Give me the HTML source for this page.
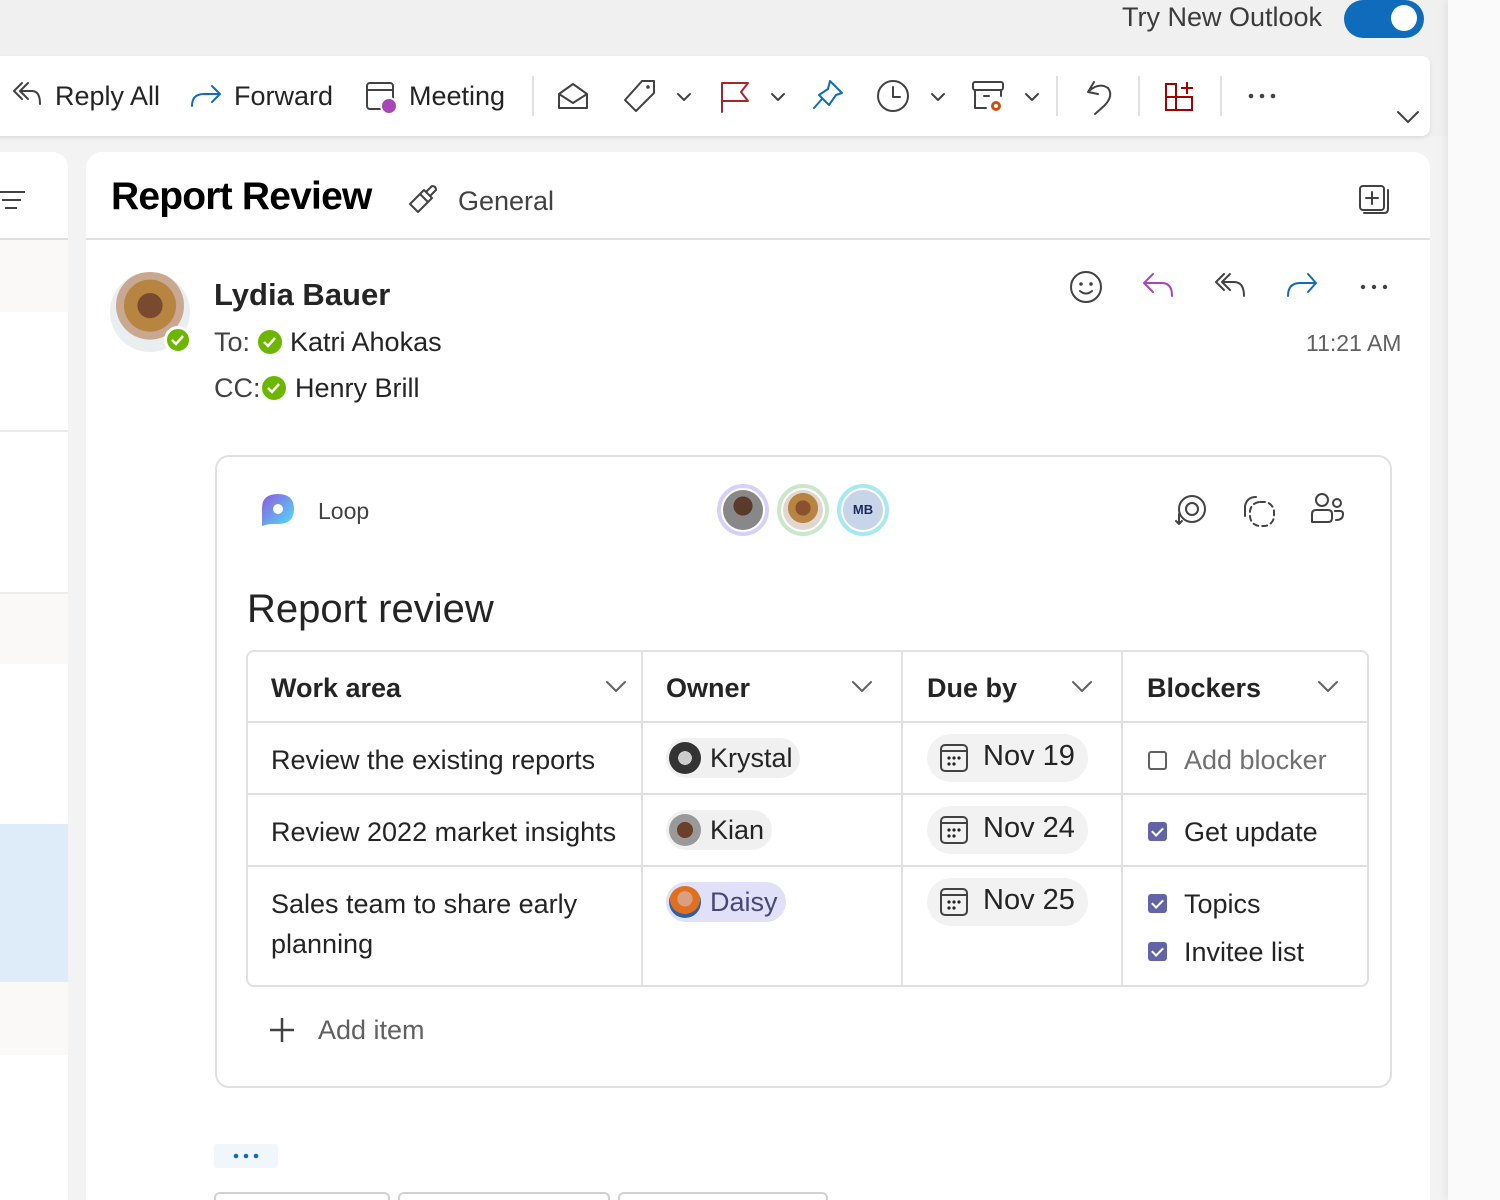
<!DOCTYPE html>
<html><head><meta charset="utf-8">
<style>
*{box-sizing:border-box;margin:0;padding:0}
html,body{width:1500px;height:1200px;overflow:hidden}
body{background:#f0f0f0;font-family:"Liberation Sans",sans-serif;color:#242424;position:relative}
.a{position:absolute}
.t{position:absolute;white-space:nowrap}
svg{position:absolute;overflow:visible}
.ic{fill:none;stroke:#424242;stroke-width:2;stroke-linecap:round;stroke-linejoin:round}
.pill{position:absolute;background:#f0f0f0;border-radius:22px}
.cb{position:absolute;width:19px;height:19px;border-radius:3px;background:#6264a7}
.cb:after{content:"";position:absolute;left:6px;top:3px;width:5px;height:9px;border:solid #fff;border-width:0 2px 2px 0;transform:rotate(45deg)}
</style></head><body>
<div class="a" style="left:0;top:136px;width:1448px;height:1064px;background:#f3f3f3"></div>
<div class="a" style="left:1448px;top:0;width:52px;height:1200px;background:#fafafa;box-shadow:-3px 0 8px rgba(0,0,0,.06)"></div>

<div class="t" style="left:1122px;top:2px;font-size:27px;color:#3b3b3b">Try New Outlook</div>
<div class="a" style="left:1344px;top:0;width:80px;height:38px;border-radius:19px;background:#0f6cbd"></div>
<div class="a" style="left:1391px;top:5px;width:26px;height:26px;border-radius:13px;background:#fff"></div>

<div class="a" style="left:-10px;top:56px;width:1440px;height:80px;background:#fff;border-radius:8px;box-shadow:0 2px 4px rgba(0,0,0,.1)"></div>
<svg width="40" height="40" style="left:8px;top:80px"><path class="ic" d="M14 3 L6 11 L14 19 M20 3 L12 11 L20 19 M12 11 H24 Q32 11 32 24" /></svg>
<div class="t" style="left:55px;top:81px;font-size:27px">Reply All</div>
<svg width="40" height="40" style="left:190px;top:82px"><path class="ic" style="stroke:#0f6cbd" d="M2 24 Q2 12 14 12 H30 M22 4 L30 12 L22 20"/></svg>
<div class="t" style="left:234px;top:81px;font-size:27px">Forward</div>
<svg width="40" height="40" style="left:365px;top:80px"><rect class="ic" x="2" y="3" width="26" height="26" rx="3"/><path class="ic" d="M2 10 H28"/><circle cx="24" cy="26" r="8" fill="#a845b8" stroke="#fff" stroke-width="2"/></svg>
<div class="t" style="left:409px;top:81px;font-size:27px">Meeting</div>
<div class="a" style="left:532px;top:76px;width:2px;height:40px;background:#e0e0e0"></div>
<svg width="40" height="40" style="left:556px;top:80px"><path class="ic" d="M3 14 L17 4 L31 14 V28 H3 Z M3 14 L17 23 L31 14"/></svg>
<svg width="40" height="40" style="left:622px;top:78px"><path class="ic" d="M20 3 H32 V15 L14 33 L3 22 Z"/><circle cx="26" cy="9" r="1.8" fill="#424242"/></svg>
<svg width="20" height="20" style="left:676px;top:90px"><path class="ic" d="M2 4 L8 10 L14 4"/></svg>
<svg width="40" height="40" style="left:720px;top:80px"><path class="ic" style="stroke:#a4262c" d="M2 32 V3 H28 L21 12 L28 21 H2"/></svg>
<svg width="20" height="20" style="left:770px;top:90px"><path class="ic" d="M2 4 L8 10 L14 4"/></svg>
<svg width="40" height="40" style="left:812px;top:79px"><path class="ic" style="stroke:#0f6cbd" d="M18 2 L30 14 L24 16 L17 26 L7 16 L16 10 Z M10 20 L2 29"/></svg>
<svg width="40" height="40" style="left:876px;top:79px"><circle class="ic" cx="17" cy="17" r="15"/><path class="ic" d="M17 8 V18 H24"/></svg>
<svg width="20" height="20" style="left:930px;top:90px"><path class="ic" d="M2 4 L8 10 L14 4"/></svg>
<svg width="40" height="40" style="left:972px;top:80px"><rect class="ic" x="1" y="2" width="30" height="8" rx="2"/><path class="ic" d="M3 10 V28 H14 M29 10 V16 M12 16 H17"/><circle cx="24" cy="26" r="5" fill="#ca5010"/><circle cx="24" cy="26" r="2" fill="#fff"/></svg>
<svg width="20" height="20" style="left:1024px;top:90px"><path class="ic" d="M2 4 L8 10 L14 4"/></svg>
<div class="a" style="left:1056px;top:76px;width:2px;height:40px;background:#e0e0e0"></div>
<svg width="40" height="40" style="left:1084px;top:80px"><path class="ic" d="M4 12 L10 2 M4 12 L14 14 M5 11 Q15 2 24 8 Q30 16 20 26 L11 34"/></svg>
<div class="a" style="left:1138px;top:76px;width:2px;height:40px;background:#e0e0e0"></div>
<svg width="40" height="40" style="left:1164px;top:80px"><path fill="none" stroke="#a80000" stroke-width="2" d="M2 4 H12 V30 H2 Z M2 17 H28 V30 H12 M23 2 V14 M17 8 H29"/></svg>
<div class="a" style="left:1220px;top:76px;width:2px;height:40px;background:#e0e0e0"></div>
<svg width="40" height="10" style="left:1248px;top:91px"><g fill="#424242"><circle cx="3" cy="5" r="2.3"/><circle cx="14" cy="5" r="2.3"/><circle cx="25" cy="5" r="2.3"/></g></svg>
<svg width="30" height="20" style="left:1396px;top:110px"><path class="ic" d="M2 2 L12 12 L22 2"/></svg>

<div class="a" style="left:-20px;top:152px;width:88px;height:1048px;background:#fff;border-radius:0 16px 0 0;overflow:hidden">
 <div class="a" style="left:0;top:86px;width:100%;height:2px;background:#e1dfdd"></div>
 <div class="a" style="left:0;top:88px;width:100%;height:72px;background:#faf9f8"></div>
 <div class="a" style="left:0;top:278px;width:100%;height:2px;background:#edebe9"></div>
 <div class="a" style="left:0;top:440px;width:100%;height:2px;background:#edebe9"></div>
 <div class="a" style="left:0;top:442px;width:100%;height:70px;background:#faf9f8"></div>
 <div class="a" style="left:0;top:672px;width:100%;height:158px;background:#deecf9"></div>
 <div class="a" style="left:0;top:830px;width:100%;height:73px;background:#faf9f8"></div>
</div>
<svg width="30" height="20" style="left:0;top:190px"><path fill="none" stroke="#424242" stroke-width="2" d="M0 2 H25 M2 10 H21 M5 18 H17"/></svg>

<div class="a" style="left:86px;top:152px;width:1344px;height:1048px;background:#fff;border-radius:16px 16px 0 0"></div>
<div class="t" style="left:111px;top:175px;font-size:39px;font-weight:bold;color:#000;letter-spacing:-.8px">Report Review</div>
<svg width="40" height="40" style="left:406px;top:184px"><path class="ic" d="M4 20 L14 10 L22 18 L12 28 Z M14 10 L18 6 L26 14 L22 18 M20 8 L26 2 Q30 2 30 6 L24 12"/></svg>
<div class="t" style="left:458px;top:186px;font-size:27px;color:#424242">General</div>
<svg width="40" height="40" style="left:1358px;top:184px"><rect class="ic" x="2" y="2" width="24" height="24" rx="3"/><path class="ic" d="M14 8 V20 M8 14 H20 M6 29 H26 Q30 29 30 25 V6"/></svg>
<div class="a" style="left:86px;top:238px;width:1344px;height:2px;background:#e0e0e0"></div>

<div class="a" style="left:110px;top:272px;width:80px;height:80px;border-radius:40px;background:radial-gradient(circle at 50% 42%,#7a4a2e 0 20%,#b88441 21% 42%,#c8a890 43% 55%,#e9eef0 56%)"></div>
<div class="a" style="left:164px;top:326px;width:28px;height:28px;border-radius:14px;background:#6bb700;border:3px solid #fff"></div>
<svg width="14" height="12" style="left:171px;top:334px"><path fill="none" stroke="#fff" stroke-width="2.5" d="M1 6 L5 10 L12 2"/></svg>
<div class="t" style="left:214px;top:277px;font-size:31px;font-weight:bold;color:#242424">Lydia Bauer</div>
<div class="t" style="left:214px;top:327px;font-size:27px;color:#424242">To:</div>
<div class="a" style="left:258px;top:330px;width:24px;height:24px;border-radius:12px;background:#6bb700"></div>
<svg width="14" height="12" style="left:263px;top:336px"><path fill="none" stroke="#fff" stroke-width="2.5" d="M1 6 L5 10 L12 2"/></svg>
<div class="t" style="left:290px;top:327px;font-size:27px">Katri Ahokas</div>
<div class="t" style="left:214px;top:373px;font-size:27px;color:#424242">CC:</div>
<div class="a" style="left:262px;top:376px;width:24px;height:24px;border-radius:12px;background:#6bb700"></div>
<svg width="14" height="12" style="left:267px;top:382px"><path fill="none" stroke="#fff" stroke-width="2.5" d="M1 6 L5 10 L12 2"/></svg>
<div class="t" style="left:295px;top:373px;font-size:27px">Henry Brill</div>

<svg width="40" height="40" style="left:1069px;top:270px"><circle class="ic" cx="17" cy="17" r="15"/><circle cx="12" cy="14" r="1.8" fill="#424242"/><circle cx="22" cy="14" r="1.8" fill="#424242"/><path class="ic" d="M11 21 Q17 26 23 21"/></svg>
<svg width="40" height="40" style="left:1142px;top:272px"><path class="ic" style="stroke:#a845b8" d="M11 2 L2 11 L11 20 M2 11 H20 Q30 11 30 24"/></svg>
<svg width="40" height="40" style="left:1214px;top:272px"><path class="ic" d="M10 2 L2 10 L10 18 M16 2 L8 10 L16 18 M8 10 H20 Q30 10 30 24"/></svg>
<svg width="40" height="40" style="left:1286px;top:272px"><path class="ic" style="stroke:#0f6cbd" d="M2 24 Q2 11 14 11 H30 M22 2 L30 11 L22 20"/></svg>
<svg width="40" height="10" style="left:1360px;top:282px"><g fill="#424242"><circle cx="3" cy="5" r="2.2"/><circle cx="14" cy="5" r="2.2"/><circle cx="25" cy="5" r="2.2"/></g></svg>
<div class="t" style="left:1306px;top:330px;font-size:23px;color:#616161">11:21 AM</div>

<div class="a" style="left:215px;top:455px;width:1177px;height:633px;border:2px solid #e0e0e0;border-radius:14px"></div>
<svg width="40" height="40" style="left:260px;top:492px"><defs><linearGradient id="lg" x1="0" y1="0" x2="1" y2="1"><stop offset="0" stop-color="#8c5ad8"/><stop offset="1" stop-color="#4fe0ff"/></linearGradient></defs><path fill="url(#lg)" d="M2 34 V16 Q2 2 18 2 Q34 2 34 17 Q34 32 18 32 H12 Q8 32 2 34 Z"/><circle cx="18" cy="17" r="5" fill="#fff"/></svg>
<div class="t" style="left:318px;top:498px;font-size:23px;color:#424242">Loop</div>
<div class="a" style="left:717px;top:484px;width:52px;height:52px;border-radius:26px;border:4px solid #d8d0f8;background:#fff"></div>
<div class="a" style="left:723px;top:490px;width:40px;height:40px;border-radius:20px;background:radial-gradient(circle at 50% 40%,#5a3a2a 0 30%,#888 31%)"></div>
<div class="a" style="left:777px;top:484px;width:52px;height:52px;border-radius:26px;border:4px solid #c8e8c8;background:#fff"></div>
<div class="a" style="left:783px;top:490px;width:40px;height:40px;border-radius:20px;background:radial-gradient(circle at 50% 45%,#8a5030 0 25%,#b88441 26% 50%,#e0d8d0 51%)"></div>
<div class="a" style="left:837px;top:484px;width:52px;height:52px;border-radius:26px;border:4px solid #a8e8f0;background:#fff"></div>
<div class="a" style="left:843px;top:490px;width:40px;height:40px;border-radius:20px;background:#c8d4e8;font-size:13px;font-weight:bold;color:#1b2a5c;text-align:center;line-height:40px">MB</div>
<svg width="40" height="40" style="left:1174px;top:494px"><circle class="ic" cx="18" cy="15" r="13"/><circle class="ic" cx="18" cy="15" r="6"/><path class="ic" d="M5 20 V30 M2 27 L5 30 L8 27"/></svg>
<svg width="40" height="40" style="left:1242px;top:494px"><path class="ic" d="M14 3 Q5 3 3 12 V22" /><rect class="ic" x="8" y="8" width="24" height="24" rx="10" stroke-dasharray="5 4"/></svg>
<svg width="40" height="40" style="left:1310px;top:492px"><circle class="ic" cx="12" cy="8" r="6"/><circle class="ic" cx="27" cy="11" r="4"/><path class="ic" d="M2 30 V22 Q2 18 6 18 H18 Q22 18 22 22 V26 Q22 30 18 30 Z M25 19 H30 Q33 19 33 22 Q33 28 26 28"/></svg>

<div class="t" style="left:247px;top:587px;font-size:40px;color:#242424">Report review</div>

<div class="a" style="left:246px;top:650px;width:1123px;height:337px;border:2px solid #e0e0e0;border-radius:8px"></div>
<div class="a" style="left:641px;top:650px;width:2px;height:337px;background:#e0e0e0"></div>
<div class="a" style="left:901px;top:650px;width:2px;height:337px;background:#e0e0e0"></div>
<div class="a" style="left:1121px;top:650px;width:2px;height:337px;background:#e0e0e0"></div>
<div class="a" style="left:246px;top:721px;width:1123px;height:2px;background:#e0e0e0"></div>
<div class="a" style="left:246px;top:793px;width:1123px;height:2px;background:#e0e0e0"></div>
<div class="a" style="left:246px;top:865px;width:1123px;height:2px;background:#e0e0e0"></div>

<div class="t" style="left:271px;top:673px;font-size:27px;font-weight:bold">Work area</div>
<div class="t" style="left:666px;top:673px;font-size:27px;font-weight:bold">Owner</div>
<div class="t" style="left:927px;top:673px;font-size:27px;font-weight:bold">Due by</div>
<div class="t" style="left:1147px;top:673px;font-size:27px;font-weight:bold">Blockers</div>
<svg width="24" height="14" style="left:606px;top:680px"><path class="ic" style="stroke:#616161" d="M1 2 L10 11 L19 2"/></svg>
<svg width="24" height="14" style="left:852px;top:680px"><path class="ic" style="stroke:#616161" d="M1 2 L10 11 L19 2"/></svg>
<svg width="24" height="14" style="left:1072px;top:680px"><path class="ic" style="stroke:#616161" d="M1 2 L10 11 L19 2"/></svg>
<svg width="24" height="14" style="left:1318px;top:680px"><path class="ic" style="stroke:#616161" d="M1 2 L10 11 L19 2"/></svg>

<div class="t" style="left:271px;top:745px;font-size:27px">Review the existing reports</div>
<div class="t" style="left:271px;top:817px;font-size:27px">Review 2022 market insights</div>
<div class="t" style="left:271px;top:889px;font-size:27px">Sales team to share early</div>
<div class="t" style="left:271px;top:929px;font-size:27px">planning</div>

<div class="pill" style="left:666px;top:738px;width:134px;height:40px"></div>
<div class="a" style="left:669px;top:742px;width:32px;height:32px;border-radius:16px;background:radial-gradient(circle,#ccc 0 30%,#333 31%)"></div>
<div class="t" style="left:710px;top:743px;font-size:27px">Krystal</div>
<div class="pill" style="left:666px;top:810px;width:106px;height:40px"></div>
<div class="a" style="left:669px;top:814px;width:32px;height:32px;border-radius:16px;background:radial-gradient(circle,#6a4028 0 35%,#999 36%)"></div>
<div class="t" style="left:710px;top:815px;font-size:27px">Kian</div>
<div class="pill" style="left:666px;top:882px;width:120px;height:40px;background:#e0e0f8"></div>
<div class="a" style="left:669px;top:886px;width:32px;height:32px;border-radius:16px;background:radial-gradient(circle at 50% 40%,#d8a080 0 30%,#e07020 31% 60%,#3060a0 61%)"></div>
<div class="t" style="left:710px;top:887px;font-size:27px;color:#464775">Daisy</div>

<div class="pill" style="left:927px;top:734px;width:161px;height:48px;border-radius:24px;background:#f2f2f2"></div>
<div class="pill" style="left:927px;top:806px;width:161px;height:48px;border-radius:24px;background:#f2f2f2"></div>
<div class="pill" style="left:927px;top:878px;width:161px;height:48px;border-radius:24px;background:#f2f2f2"></div>
<svg width="30" height="30" style="left:940px;top:744px"><rect class="ic" x="1" y="1" width="26" height="26" rx="4"/><path class="ic" d="M1 7 H27"/><g fill="#242424"><circle cx="9" cy="14" r="1.6"/><circle cx="14" cy="14" r="1.6"/><circle cx="19" cy="14" r="1.6"/><circle cx="9" cy="20" r="1.6"/><circle cx="14" cy="20" r="1.6"/></g></svg>
<svg width="30" height="30" style="left:940px;top:816px"><rect class="ic" x="1" y="1" width="26" height="26" rx="4"/><path class="ic" d="M1 7 H27"/><g fill="#242424"><circle cx="9" cy="14" r="1.6"/><circle cx="14" cy="14" r="1.6"/><circle cx="19" cy="14" r="1.6"/><circle cx="9" cy="20" r="1.6"/><circle cx="14" cy="20" r="1.6"/></g></svg>
<svg width="30" height="30" style="left:940px;top:888px"><rect class="ic" x="1" y="1" width="26" height="26" rx="4"/><path class="ic" d="M1 7 H27"/><g fill="#242424"><circle cx="9" cy="14" r="1.6"/><circle cx="14" cy="14" r="1.6"/><circle cx="19" cy="14" r="1.6"/><circle cx="9" cy="20" r="1.6"/><circle cx="14" cy="20" r="1.6"/></g></svg>
<div class="t" style="left:983px;top:740px;font-size:29px">Nov 19</div>
<div class="t" style="left:983px;top:812px;font-size:29px">Nov 24</div>
<div class="t" style="left:983px;top:884px;font-size:29px">Nov 25</div>

<div class="a" style="left:1148px;top:751px;width:19px;height:19px;border:2px solid #616161;border-radius:3px"></div>
<div class="t" style="left:1184px;top:745px;font-size:27px;color:#707070">Add blocker</div>
<div class="cb" style="left:1148px;top:822px"></div>
<div class="t" style="left:1184px;top:817px;font-size:27px">Get update</div>
<div class="cb" style="left:1148px;top:894px"></div>
<div class="t" style="left:1184px;top:889px;font-size:27px">Topics</div>
<div class="cb" style="left:1148px;top:942px"></div>
<div class="t" style="left:1184px;top:937px;font-size:27px">Invitee list</div>

<svg width="30" height="30" style="left:270px;top:1018px"><path fill="none" stroke="#424242" stroke-width="2.5" d="M12 0 V24 M0 12 H24"/></svg>
<div class="t" style="left:318px;top:1015px;font-size:27px;color:#616161">Add item</div>

<div class="a" style="left:214px;top:1144px;width:64px;height:24px;border-radius:3px;background:#eff6fc"></div>
<svg width="40" height="10" style="left:233px;top:1151px"><g fill="#0f6cbd"><circle cx="3" cy="5" r="2.3"/><circle cx="13" cy="5" r="2.3"/><circle cx="23" cy="5" r="2.3"/></g></svg>
<div class="a" style="left:214px;top:1192px;width:176px;height:8px;border:2px solid #d1d1d1;border-bottom:none;border-radius:6px 6px 0 0"></div>
<div class="a" style="left:398px;top:1192px;width:212px;height:8px;border:2px solid #d1d1d1;border-bottom:none;border-radius:6px 6px 0 0"></div>
<div class="a" style="left:618px;top:1192px;width:210px;height:8px;border:2px solid #d1d1d1;border-bottom:none;border-radius:6px 6px 0 0"></div>
</body></html>
